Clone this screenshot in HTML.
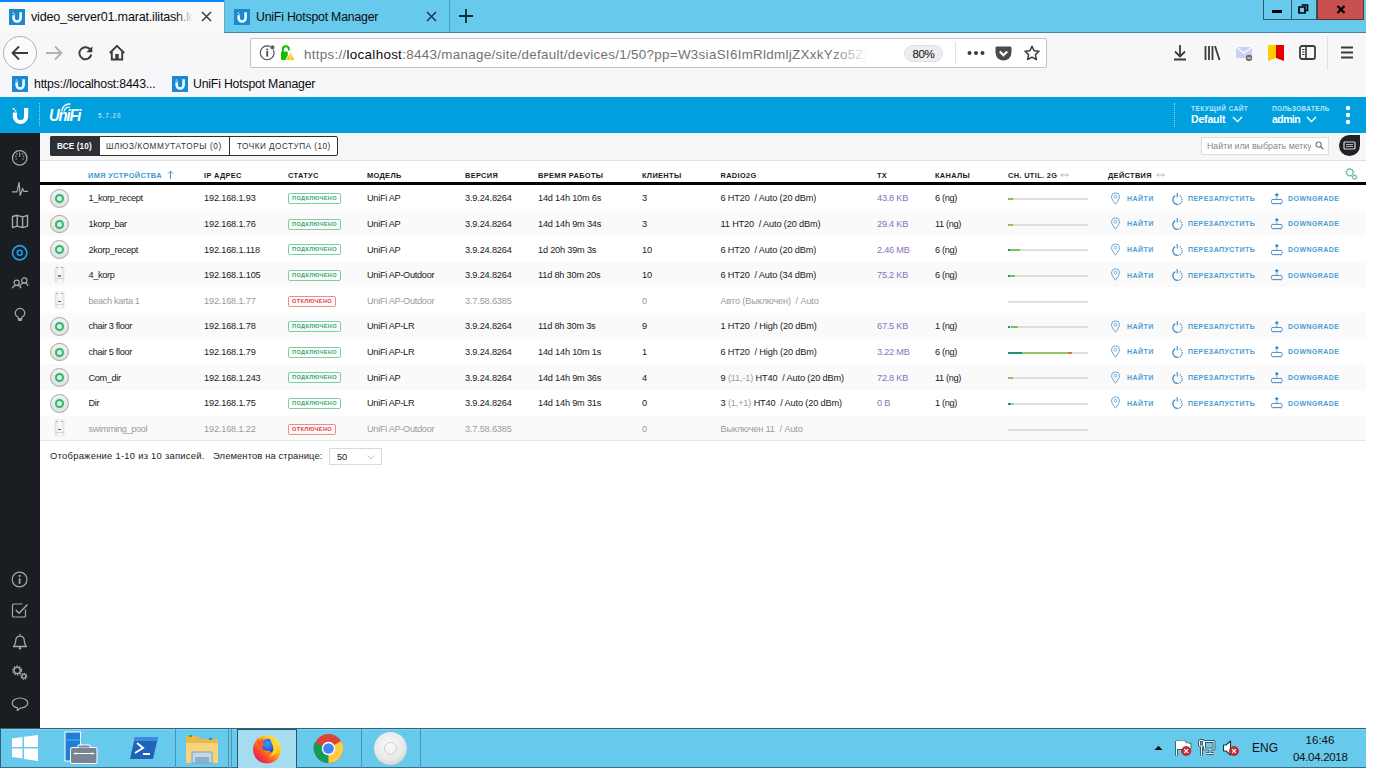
<!DOCTYPE html>
<html><head><meta charset="utf-8"><style>
*{box-sizing:border-box;margin:0;padding:0}
html,body{width:1397px;height:768px;overflow:hidden;background:#fff;font-family:"Liberation Sans",sans-serif;position:relative}
.a{position:absolute}
.fav{width:16px;height:16px}
.tabtxt{font-size:12.3px;letter-spacing:-0.2px;color:#0c0c0d;white-space:nowrap;line-height:16px}
.th{position:absolute;top:171px;font-size:7.4px;font-weight:bold;color:#1a1a1a;letter-spacing:0.35px;white-space:nowrap;line-height:9px}
.td{position:absolute;font-size:9.2px;color:#202020;white-space:nowrap;line-height:12px}
.c1{letter-spacing:-0.35px}.c2{letter-spacing:-0.17px}.c3{letter-spacing:-0.3px}.c4{letter-spacing:-0.17px}.c5{letter-spacing:-0.2px}.c6{letter-spacing:-0.17px}.c7{letter-spacing:-0.15px}.c8{letter-spacing:-0.22px}.c9{letter-spacing:-0.35px}
.off{color:#9a9a9a}
.tx{color:#8e6fc2}
.badge{position:absolute;width:53px;height:11px;border:1px solid #7ccfa4;border-radius:2px;font-size:5.6px;font-weight:bold;color:#35aa6c;text-align:center;line-height:9px;letter-spacing:0.36px}
.badge.r{width:48px;border-color:#ee8b8b;color:#e43b3b}
.act{position:absolute;font-size:7px;font-weight:bold;color:#4a9ed3;letter-spacing:0.45px;white-space:nowrap;line-height:9px}
.bar{position:absolute;left:1008px;width:80px;height:2px;background:#dedede}
.sico{position:absolute;left:10px;width:20px;height:20px}
</style></head><body>
<!-- TAB BAR -->
<div class="a" style="left:0;top:0;width:1366px;height:33px;background:#67c9eb;border-bottom:1px solid #4a8296"></div>
<div class="a" style="left:0;top:0;width:224px;height:34px;background:#f9f9fa;border-top:2px solid #0a84ff"></div>
<div class="a fav" style="left:9px;top:9px"><svg width="16" height="16" viewBox="0 0 16 16"><rect width="16" height="16" fill="#1a8ad0"/><path d="M3.3 6.2v2.8a4.8 4.8 0 0 0 9.6 0V3.2h-2.6V9a2.2 2.2 0 0 1-4.4 0V6.2z" fill="#f4fbff"/><rect x="3.6" y="3.4" width="1.4" height="1.4" fill="#cdeaf8"/><rect x="5.2" y="5" width="1" height="1" fill="#cdeaf8"/></svg></div>
<div class="a tabtxt" style="left:31px;top:9px;width:165px;overflow:hidden;font-size:12.6px">video_server01.marat.ilitash.loc</div>
<div class="a" style="left:176px;top:6px;width:20px;height:20px;background:linear-gradient(90deg,rgba(249,249,250,0),#f9f9fa 85%)"></div>
<svg class="a" style="left:201px;top:11px" width="11" height="11" viewBox="0 0 11 11"><path d="M1 1L10 10M10 1L1 10" stroke="#3b3b3d" stroke-width="1.5"/></svg>
<div class="a" style="left:224px;top:0;width:1px;height:32px;background:#5aaecb"></div>
<div class="a fav" style="left:234px;top:9px"><svg width="16" height="16" viewBox="0 0 16 16"><rect width="16" height="16" fill="#1a8ad0"/><path d="M3.3 6.2v2.8a4.8 4.8 0 0 0 9.6 0V3.2h-2.6V9a2.2 2.2 0 0 1-4.4 0V6.2z" fill="#f4fbff"/><rect x="3.6" y="3.4" width="1.4" height="1.4" fill="#cdeaf8"/><rect x="5.2" y="5" width="1" height="1" fill="#cdeaf8"/></svg></div>
<div class="a tabtxt" style="left:256px;top:9px">UniFi Hotspot Manager</div>
<svg class="a" style="left:426px;top:11px" width="11" height="11" viewBox="0 0 11 11"><path d="M1 1L10 10M10 1L1 10" stroke="#1d3b47" stroke-width="1.5"/></svg>
<div class="a" style="left:449px;top:0;width:1px;height:32px;background:#4d9fbd"></div>
<svg class="a" style="left:458px;top:8px" width="16" height="16" viewBox="0 0 16 16"><path d="M8 1V15M1 8H15" stroke="#0d2a35" stroke-width="1.8"/></svg>
<!-- window controls -->
<div class="a" style="left:1263px;top:0;width:29px;height:20px;background:#67c9eb;border:1px solid #2e5a6b;border-top:none"></div>
<div class="a" style="left:1272px;top:10px;width:10px;height:3px;background:#000"></div>
<div class="a" style="left:1291px;top:0;width:26px;height:20px;background:#67c9eb;border:1px solid #2e5a6b;border-top:none"></div>
<svg class="a" style="left:1298px;top:4px" width="11" height="10" viewBox="0 0 11 10"><path d="M3.5 1h6v5.5h-1.5M1 3h6v6H1z" fill="none" stroke="#000" stroke-width="1.7"/></svg>
<div class="a" style="left:1317px;top:0;width:47px;height:20px;background:#c75050;border:1px solid #5c3434;border-top:none"></div>
<svg class="a" style="left:1336px;top:5px" width="10" height="9" viewBox="0 0 10 9"><path d="M1.5 1L8.5 8M8.5 1L1.5 8" stroke="#000" stroke-width="2.2"/></svg>
<!-- NAV BAR -->
<div class="a" style="left:0;top:33px;width:1366px;height:64px;background:#f7f7f9"></div>
<div class="a" style="left:3px;top:36px;width:34px;height:34px;border-radius:50%;border:1px solid #b1b1b3;background:#fbfbfb"></div>
<svg class="a" style="left:11px;top:45px" width="18" height="16" viewBox="0 0 18 16"><path d="M17 8H2M8 1.5L1.5 8L8 14.5" fill="none" stroke="#3b3b3d" stroke-width="1.8"/></svg>
<svg class="a" style="left:45px;top:45px" width="18" height="16" viewBox="0 0 18 16"><path d="M1 8H16M10 1.5L16.5 8L10 14.5" fill="none" stroke="#b1b1b3" stroke-width="1.8"/></svg>
<svg class="a" style="left:77px;top:45px" width="17" height="16" viewBox="0 0 17 16"><path d="M13.6 5.2A6 6 0 1 0 14.3 9.5" fill="none" stroke="#3b3b3d" stroke-width="1.9"/><path d="M15.3 1.3V7.2H9.4z" fill="#3b3b3d"/></svg>
<svg class="a" style="left:108px;top:44px" width="18" height="18" viewBox="0 0 18 18"><path d="M1.8 9L9 1.8L16.2 9" fill="none" stroke="#3b3b3d" stroke-width="1.9" stroke-linejoin="round"/><path d="M3.8 7.5V15.5H14.2V7.5" fill="none" stroke="#3b3b3d" stroke-width="1.9"/><rect x="7.3" y="10" width="3.4" height="5.5" fill="#3b3b3d"/></svg>
<!-- URL BAR -->
<div class="a" style="left:250px;top:38px;width:797px;height:30px;background:#fff;border:1px solid #c2c2c4;border-radius:2px"></div>
<svg class="a" style="left:258px;top:44px" width="18" height="18" viewBox="0 0 18 18"><circle cx="9.2" cy="8.8" r="6.9" fill="none" stroke="#4a4a4f" stroke-width="1.1"/><rect x="8.3" y="7" width="1.8" height="5.6" fill="#4a4a4f"/><rect x="8.3" y="4.6" width="1.8" height="1.6" fill="#4a4a4f"/><circle cx="14.4" cy="3.4" r="2.4" fill="#5a5a5f" stroke="#fff" stroke-width="0.7"/></svg>
<svg class="a" style="left:280px;top:45px" width="16" height="16" viewBox="0 0 16 16"><rect x="1" y="6.5" width="6.8" height="8.5" rx="1.3" fill="#12bc00"/><path d="M2.8 7V4.2a3 3 0 0 1 6 0V5.4" fill="none" stroke="#12bc00" stroke-width="1.9"/><path d="M10.3 6.8L15.2 15.6H5.4z" fill="#ffc20e" stroke="#fff" stroke-width="0.9" stroke-linejoin="round"/><rect x="9.8" y="9.4" width="1" height="3.4" fill="#fff"/><rect x="9.8" y="13.5" width="1" height="1" fill="#fff"/></svg>
<div class="a" style="left:304px;top:45.5px;font-size:13.4px;letter-spacing:0.3px;color:#737373;white-space:nowrap;width:580px;overflow:hidden;line-height:17px">https://<span style="color:#0c0c0d">localhost</span>:8443/manage/site/default/devices/1/50?pp=W3siaSI6ImRldmljZXxkYzo5ZjpkYjpm</div>
<div class="a" style="left:832px;top:40px;width:60px;height:26px;background:linear-gradient(90deg,rgba(255,255,255,0),#fff 60%)"></div>
<div class="a" style="left:904px;top:45px;width:39px;height:17px;border-radius:9px;background:#ededf0;border:1px solid #e0e0e2;font-size:11.5px;letter-spacing:-0.4px;color:#0c0c0d;text-align:center;line-height:16px">80%</div>
<div class="a" style="left:955px;top:42px;width:1px;height:22px;background:#e1e1e2"></div>
<svg class="a" style="left:967px;top:50px" width="18" height="6" viewBox="0 0 18 6"><circle cx="2.5" cy="3" r="2" fill="#3b3b3d"/><circle cx="9" cy="3" r="2" fill="#3b3b3d"/><circle cx="15.5" cy="3" r="2" fill="#3b3b3d"/></svg>
<svg class="a" style="left:995px;top:46px" width="17" height="15" viewBox="0 0 17 15"><path d="M.5 2C.5 1 1.2.5 2 .5h13c.8 0 1.5.5 1.5 1.5V6.5a8 8 0 0 1-16 0z" fill="#4a4a4f"/><path d="M4.8 5.5L8.5 9.2l3.7-3.7" fill="none" stroke="#fff" stroke-width="2.2"/></svg>
<svg class="a" style="left:1024px;top:45px" width="16" height="16" viewBox="0 0 16 16"><path d="M8 1.2l2.1 4.5 4.9.6-3.6 3.3 1 4.9L8 12.1l-4.4 2.4 1-4.9L1 6.3l4.9-.6z" fill="none" stroke="#3b3b3d" stroke-width="1.5" stroke-linejoin="round"/></svg>
<!-- right toolbar icons -->
<svg class="a" style="left:1172px;top:44px" width="16" height="17" viewBox="0 0 16 17"><path d="M8 1v11M3 7.5L8 12.5L13 7.5M2 15.5H14" fill="none" stroke="#3b3b3d" stroke-width="1.8"/></svg>
<svg class="a" style="left:1204px;top:45px" width="17" height="15" viewBox="0 0 17 15"><path d="M1.5 1v14M5 1v14M8.5 1v14M11 1l4.5 14" fill="none" stroke="#3b3b3d" stroke-width="1.8"/></svg>
<svg class="a" style="left:1236px;top:46px" width="17" height="15" viewBox="0 0 17 15"><path d="M0 1h16v11H0z" fill="#c8d3ef"/><path d="M0 1L8 7L16 1" fill="none" stroke="#fff" stroke-width="1.2"/><circle cx="13" cy="12" r="3.2" fill="#6d6d6d"/><path d="M11.3 12h3.5" stroke="#fff" stroke-width="1"/></svg>
<svg class="a" style="left:1268px;top:45px" width="16" height="16" viewBox="0 0 16 16"><path d="M0 0h8v13L0 16z" fill="#ffcc00"/><path d="M8 0h8v16L8 13z" fill="#e60000"/></svg>
<svg class="a" style="left:1299px;top:45px" width="17" height="15" viewBox="0 0 17 15"><rect x="1" y="1" width="15" height="13" rx="2" fill="none" stroke="#3b3b3d" stroke-width="1.8"/><path d="M7 1v13" stroke="#3b3b3d" stroke-width="1.6"/><path d="M3 4.5h2.5M3 7h2.5M3 9.5h2.5" stroke="#3b3b3d" stroke-width="1"/></svg>
<div class="a" style="left:1327px;top:36px;width:1px;height:34px;background:#e1e1e2"></div>
<svg class="a" style="left:1340px;top:46px" width="14" height="13" viewBox="0 0 14 13"><path d="M1 1.5h12M1 6.5h12M1 11.5h12" stroke="#3b3b3d" stroke-width="1.8"/></svg>
<!-- BOOKMARKS -->
<div class="a fav" style="left:12px;top:76px"><svg width="16" height="16" viewBox="0 0 16 16"><rect width="16" height="16" fill="#1a8ad0"/><path d="M3.3 6.2v2.8a4.8 4.8 0 0 0 9.6 0V3.2h-2.6V9a2.2 2.2 0 0 1-4.4 0V6.2z" fill="#f4fbff"/><rect x="3.6" y="3.4" width="1.4" height="1.4" fill="#cdeaf8"/><rect x="5.2" y="5" width="1" height="1" fill="#cdeaf8"/></svg></div>
<div class="a tabtxt" style="left:34px;top:76px">https://localhost:8443...</div>
<div class="a fav" style="left:172px;top:76px"><svg width="16" height="16" viewBox="0 0 16 16"><rect width="16" height="16" fill="#1a8ad0"/><path d="M3.3 6.2v2.8a4.8 4.8 0 0 0 9.6 0V3.2h-2.6V9a2.2 2.2 0 0 1-4.4 0V6.2z" fill="#f4fbff"/><rect x="3.6" y="3.4" width="1.4" height="1.4" fill="#cdeaf8"/><rect x="5.2" y="5" width="1" height="1" fill="#cdeaf8"/></svg></div>
<div class="a tabtxt" style="left:193px;top:76px">UniFi Hotspot Manager</div>


<!-- UNIFI HEADER -->
<div class="a" style="left:0;top:97px;width:1366px;height:36px;background:#00a0df"></div>
<svg class="a" style="left:12px;top:106.5px" width="17" height="17" viewBox="0 0 17 17"><path d="M0.8 5.5v4a7.7 7.5 0 0 0 15.4 0V1h-4.2v8.5a3.5 3.5 0 0 1-7 0V5.5z" fill="#fff"/><rect x="0.8" y="1" width="1.8" height="1.8" fill="#fff"/><rect x="2.8" y="3" width="1.5" height="1.5" fill="#fff"/></svg>
<div class="a" style="left:39px;top:103px;width:1px;height:23px;border-left:1px dotted rgba(255,255,255,0.55)"></div>
<div class="a" style="left:49px;top:105.5px;font-size:16.5px;font-weight:bold;font-style:italic;color:#fff;letter-spacing:-1.3px;line-height:19px;transform:scaleX(0.9);transform-origin:0 0">UniFi</div>
<svg class="a" style="left:61px;top:102.5px" width="10" height="9" viewBox="0 0 10 9"><path d="M1 8.5A7 7 0 0 1 9.5 1.2M3.2 8.5A4.5 4.5 0 0 1 8.8 4.3" fill="none" stroke="#fff" stroke-width="1.3"/></svg>
<div class="a" style="left:98px;top:112px;font-size:6.3px;font-weight:bold;color:#9fdcf5;letter-spacing:1.0px;line-height:8px">5.7.20</div>
<div class="a" style="left:1174px;top:103px;width:1px;height:24px;border-left:1px dotted rgba(255,255,255,0.6)"></div>
<div class="a" style="left:1191px;top:105px;font-size:6.4px;font-weight:bold;color:#b9e6f8;letter-spacing:0.5px;line-height:8px">ТЕКУЩИЙ САЙТ</div>
<div class="a" style="left:1191px;top:113px;font-size:10.6px;font-weight:bold;color:#fff;line-height:12px;letter-spacing:-0.22px">Default</div>
<svg class="a" style="left:1232px;top:116px" width="11" height="7" viewBox="0 0 11 7"><path d="M1 1l4.5 4.5L10 1" fill="none" stroke="#fff" stroke-width="1.4"/></svg>
<div class="a" style="left:1272px;top:105px;font-size:6.4px;font-weight:bold;color:#b9e6f8;letter-spacing:0.4px;line-height:8px">ПОЛЬЗОВАТЕЛЬ</div>
<div class="a" style="left:1272px;top:113.7px;font-size:10.4px;font-weight:bold;color:#fff;line-height:12px;letter-spacing:-0.5px">admin</div>
<svg class="a" style="left:1306px;top:116px" width="11" height="7" viewBox="0 0 11 7"><path d="M1 1l4.5 4.5L10 1" fill="none" stroke="#fff" stroke-width="1.4"/></svg>
<svg class="a" style="left:1345px;top:105px" width="6" height="20" viewBox="0 0 6 20"><circle cx="3" cy="3" r="2.2" fill="#fff"/><circle cx="3" cy="10" r="2.2" fill="#fff"/><circle cx="3" cy="17" r="2.2" fill="#fff"/></svg>
<!-- SIDEBAR -->
<div class="a" style="left:0;top:133px;width:40px;height:595px;background:#1a1d22"></div>
<svg class="a" style="left:10px;top:148px" width="20" height="20" viewBox="0 0 20 20"><circle cx="9.7" cy="9.9" r="7.2" fill="none" stroke="#a8aaad" stroke-width="1.3"/><path d="M9.7 4.5v4.2M5 8.2h1.8M12.6 8.2h1.8M6.3 5.3l1.1 1M13.1 5.3l-1.1 1M5.6 11h1.5M12.3 11h1.5" stroke="#a8aaad" stroke-width="1.1"/></svg>
<svg class="a" style="left:10px;top:180px" width="20" height="20" viewBox="0 0 20 20"><path d="M2 11.9H7L9.1 2.5L10.2 15.4L12.6 8.4L13.8 11.3H18" fill="none" stroke="#a8aaad" stroke-width="1.2" stroke-linejoin="round"/></svg>
<svg class="a" style="left:10px;top:211px" width="20" height="20" viewBox="0 0 20 20"><path d="M2.5 5.5L7.2 4.3L12.6 5.8L17.5 4.3V15.2L12.6 16.6L7.2 15.1L2.5 16.6z M7.2 4.3V15.1 M12.6 5.8V16.6" fill="none" stroke="#a8aaad" stroke-width="1.4" stroke-linejoin="round"/></svg>
<svg class="a" style="left:10px;top:242.5px" width="20" height="20" viewBox="0 0 20 20"><circle cx="9.7" cy="9.8" r="7.1" fill="none" stroke="#1e9fe3" stroke-width="1.7"/><circle cx="9.7" cy="9.8" r="2.5" fill="none" stroke="#1e9fe3" stroke-width="1.6"/></svg>
<svg class="a" style="left:10px;top:274px" width="20" height="20" viewBox="0 0 20 20"><circle cx="6.7" cy="8.8" r="2.6" fill="none" stroke="#a8aaad" stroke-width="1.2"/><circle cx="14.3" cy="6.4" r="2.6" fill="none" stroke="#a8aaad" stroke-width="1.2"/><path d="M2.3 14.2C3 12.3 4.5 11.4 6.7 11.4S10.4 12.3 11.1 14.2M10.2 11.6C10.8 9.9 12.3 9 14.3 9S17.6 9.9 18 11.8" fill="none" stroke="#a8aaad" stroke-width="1.2"/></svg>
<svg class="a" style="left:10px;top:305px" width="20" height="20" viewBox="0 0 20 20"><path d="M8.2 13.8V12.2C6.3 11.2 5.2 9.8 5.2 8.2a4.8 4.8 0 0 1 9.6 0c0 1.6-1.1 3-3 4v1.6z" fill="none" stroke="#a8aaad" stroke-width="1.2"/><rect x="8.3" y="13.6" width="3.4" height="2.4" fill="#a8aaad"/></svg>
<svg class="a" style="left:10px;top:569.5px" width="20" height="20" viewBox="0 0 20 20"><circle cx="9.6" cy="9.5" r="7.4" fill="none" stroke="#a8aaad" stroke-width="1.2"/><path d="M9.6 8.3v5.5" stroke="#a8aaad" stroke-width="1.7"/><circle cx="9.6" cy="5.9" r="1.05" fill="#a8aaad"/></svg>
<svg class="a" style="left:10px;top:600px" width="20" height="20" viewBox="0 0 20 20"><path d="M15.5 9.5V16a1 1 0 0 1-1 1H3.5a1 1 0 0 1-1-1V5a1 1 0 0 1 1-1h9" fill="none" stroke="#a8aaad" stroke-width="1.2"/><path d="M5.8 10l3.2 3.2L17.5 4.5" fill="none" stroke="#a8aaad" stroke-width="1.4"/></svg>
<svg class="a" style="left:10px;top:631px" width="20" height="20" viewBox="0 0 20 20"><path d="M3.5 15.5h13c-1.6-1.6-2.3-3-2.3-6.2a4.2 4.2 0 0 0-8.4 0c0 3.2-.7 4.6-2.3 6.2z" fill="none" stroke="#a8aaad" stroke-width="1.3" stroke-linejoin="round"/><path d="M10 3v1.2" stroke="#a8aaad" stroke-width="1.3"/><circle cx="10" cy="17.3" r="1.2" fill="#a8aaad"/></svg>
<svg class="a" style="left:10px;top:662px" width="20" height="20" viewBox="0 0 20 20"><circle cx="7.2" cy="8.5" r="3.1" fill="none" stroke="#a8aaad" stroke-width="1.3"/><circle cx="7.2" cy="8.5" r="4.3" fill="none" stroke="#a8aaad" stroke-width="1.5" stroke-dasharray="1.5 1.2"/><circle cx="13.9" cy="14.3" r="1.9" fill="none" stroke="#a8aaad" stroke-width="1.2"/><circle cx="13.9" cy="14.3" r="2.9" fill="none" stroke="#a8aaad" stroke-width="1.3" stroke-dasharray="1.2 1"/></svg>
<svg class="a" style="left:10px;top:694px" width="20" height="20" viewBox="0 0 20 20"><path d="M10 4C5.6 4 2.2 6.1 2.2 9c0 2.3 2.2 4.2 5.3 4.8L7.3 16.5L10.6 14c4-.2 7.2-2.3 7.2-5C17.8 6.1 14.4 4 10 4z" fill="none" stroke="#a8aaad" stroke-width="1.2" stroke-linejoin="round"/></svg>
<!-- TOOLBAR -->
<div class="a" style="left:40px;top:133px;width:1326px;height:28px;background:#f6f6f6;border-bottom:1px solid #e2e2e2"></div>
<div class="a" style="left:50px;top:136px;width:288px;height:20px;border:1px solid #2c2f33;border-radius:2px;background:#fff"></div>
<div class="a" style="left:50px;top:136px;width:50px;height:20px;background:#2c2f33;border-radius:2px 0 0 2px"></div>
<div class="a" style="left:229px;top:136px;width:1px;height:20px;background:#2c2f33"></div>
<div class="a" style="left:57px;top:141.7px;font-size:8.2px;font-weight:bold;color:#fff;line-height:10px;letter-spacing:0.12px">ВСЕ (10)</div>
<div class="a" style="left:106px;top:141.7px;font-size:8.2px;color:#333;line-height:10px;letter-spacing:0.6px">ШЛЮЗ/КОММУТАТОРЫ (0)</div>
<div class="a" style="left:237px;top:141.7px;font-size:8.2px;color:#333;line-height:10px;letter-spacing:0.48px">ТОЧКИ ДОСТУПА (10)</div>
<div class="a" style="left:1201px;top:137px;width:128px;height:18px;background:#fff;border:1px solid #dcdcdc"></div>
<div class="a" style="left:1207px;top:141px;width:104px;overflow:hidden;font-size:8.8px;color:#888;line-height:10px;white-space:nowrap">Найти или выбрать метку</div>
<svg class="a" style="left:1315px;top:141px" width="9" height="9" viewBox="0 0 9 9"><circle cx="3.6" cy="3.6" r="2.6" fill="none" stroke="#777" stroke-width="1.1"/><path d="M5.5 5.5L8.3 8.3" stroke="#777" stroke-width="1.3"/></svg>
<div class="a" style="left:1339px;top:135px;width:21px;height:21px;background:#1f2226;border-radius:50% 0 50% 50%"></div>
<svg class="a" style="left:1343px;top:140px" width="13" height="11" viewBox="0 0 13 11"><rect x="1" y="2" width="11" height="7" rx="1" fill="none" stroke="#d8d8d8" stroke-width="1.2"/><path d="M3 4.5h7M3 6.5h7" stroke="#d8d8d8" stroke-width="0.8"/></svg>
<!-- TABLE HEADER -->
<div class="th" style="left:88px;color:#3a9ad6">ИМЯ УСТРОЙСТВА</div>
<svg class="a" style="left:167px;top:170px" width="7" height="10" viewBox="0 0 7 10"><path d="M3.5 1.2V8.8M1 3.7L3.5 1.2L6 3.7" fill="none" stroke="#4a8fc2" stroke-width="1"/></svg>
<div class="th" style="left:204px">IP АДРЕС</div>
<div class="th" style="left:288px">СТАТУС</div>
<div class="th" style="left:367px">МОДЕЛЬ</div>
<div class="th" style="left:465px">ВЕРСИЯ</div>
<div class="th" style="left:538px">ВРЕМЯ РАБОТЫ</div>
<div class="th" style="left:642px">КЛИЕНТЫ</div>
<div class="th" style="left:720.5px">RADIO2G</div>
<div class="th" style="left:877px">TX</div>
<div class="th" style="left:935px">КАНАЛЫ</div>
<div class="th" style="left:1008px">CH. UTIL. 2G</div>
<svg class="a" style="left:1060px;top:172px" width="9" height="6" viewBox="0 0 9 6"><path d="M0.8 3H8.2M2.5 1.2L0.8 3L2.5 4.8M6.5 1.2L8.2 3L6.5 4.8" fill="none" stroke="#aaa" stroke-width="0.8"/></svg>
<div class="th" style="left:1108px">ДЕЙСТВИЯ</div>
<svg class="a" style="left:1156px;top:172px" width="9" height="6" viewBox="0 0 9 6"><path d="M0.8 3H8.2M2.5 1.2L0.8 3L2.5 4.8M6.5 1.2L8.2 3L6.5 4.8" fill="none" stroke="#aaa" stroke-width="0.8"/></svg>
<svg class="a" style="left:1344px;top:167px" width="14" height="14" viewBox="0 0 14 14"><circle cx="5.8" cy="5.4" r="3.3" fill="none" stroke="#3aa775" stroke-width="0.8"/><circle cx="5.8" cy="5.4" r="4" fill="none" stroke="#3aa775" stroke-width="0.9" stroke-dasharray="0.9 1.2"/><circle cx="10.6" cy="10.2" r="1.8" fill="none" stroke="#3aa775" stroke-width="0.8"/><circle cx="10.6" cy="10.2" r="2.4" fill="none" stroke="#3aa775" stroke-width="0.8" stroke-dasharray="0.8 0.9"/></svg>
<div class="a" style="left:40px;top:182px;width:1326px;height:3px;background:#000"></div>
<div class="a" style="left:50px;top:189.1px;width:18.8px;height:18.8px;border-radius:50%;background:radial-gradient(circle at 50% 35%,#fbfbfb 0,#ececec 50%,#d2d2d2 100%);border:1.3px solid #a9a9a9"></div>
<div class="a" style="left:54.9px;top:194.0px;width:9px;height:9px;border-radius:50%;border:2px solid #3ab476;background:#d6f6e0;box-shadow:0 0 1px 0.5px rgba(120,230,160,0.5)"></div>
<div class="td c1" style="left:88.5px;top:192.3px">1_korp_recept</div>
<div class="td c2" style="left:204px;top:192.3px">192.168.1.93</div>
<div class="badge" style="left:288px;top:193.2px">ПОДКЛЮЧЕНО</div>
<div class="td c3" style="left:367px;top:192.3px">UniFi AP</div>
<div class="td c4" style="left:465px;top:192.3px">3.9.24.8264</div>
<div class="td c5" style="left:538px;top:192.3px">14d 14h 10m 6s</div>
<div class="td c6" style="left:642px;top:192.3px">3</div>
<div class="td c7" style="left:720.5px;top:192.3px">6 HT20&nbsp; / Auto (20 dBm)</div>
<div class="td tx c8" style="left:877px;top:192.3px">43.8 KB</div>
<div class="td c9" style="left:935px;top:192.3px">6 (ng)</div>
<div class="bar" style="top:198.1px"></div>
<div class="a" style="left:1008px;top:198.1px;width:5px;height:2px;background:#7cc35b"></div>
<svg class="a" style="left:1110px;top:191.5px" width="11" height="13" viewBox="0 0 11 13"><path d="M5.5 12.2C3.2 9 1.5 6.8 1.5 4.8a4 4 0 0 1 8 0c0 2-1.7 4.2-4 7.4z" fill="none" stroke="#6aa8d6" stroke-width="1"/><circle cx="5.5" cy="4.7" r="1.4" fill="none" stroke="#6aa8d6" stroke-width="0.9"/></svg>
<div class="act" style="left:1127px;top:193.7px">НАЙТИ</div>
<svg class="a" style="left:1171px;top:191.5px" width="13" height="13" viewBox="0 0 13 13"><path d="M4.2 3.6A4.8 4.8 0 0 0 6.5 12.5" fill="none" stroke="#3d8fc6" stroke-width="1.3"/><path d="M6.5 12.5A4.8 4.8 0 0 0 8.8 3.6" fill="none" stroke="#3d8fc6" stroke-width="1.3" stroke-dasharray="1.2 1"/><path d="M6.3 1V5.5" stroke="#4a9ed3" stroke-width="1.3"/></svg>
<div class="act" style="left:1188px;top:193.7px">ПЕРЕЗАПУСТИТЬ</div>
<svg class="a" style="left:1270px;top:191.5px" width="14" height="13" viewBox="0 0 14 13"><path d="M6.8 0.6L7.5 2L9 2.1L7.9 3.1L8.2 4.5L6.8 3.8L5.4 4.5L5.7 3.1L4.6 2.1L6.1 2z" fill="#2f86c0"/><path d="M6.8 4.2v3.3" fill="none" stroke="#8fbde0" stroke-width="1.2"/><rect x="1.6" y="7.5" width="10.5" height="4" rx="0.8" fill="none" stroke="#5a93c6" stroke-width="1"/><path d="M3 6.8v0.8M5.3 6.8v0.8M8.3 6.8v0.8M10.7 6.8v0.8M3 11.5v1M5.3 11.5v1M8.3 11.5v1M10.7 11.5v1" stroke="#5a93c6" stroke-width="0.9"/></svg>
<div class="act" style="left:1288px;top:193.7px">DOWNGRADE</div>
<div class="a" style="left:40px;top:210.7px;width:1326px;height:25.6px;background:#fafafa"></div>
<div class="a" style="left:50px;top:214.7px;width:18.8px;height:18.8px;border-radius:50%;background:radial-gradient(circle at 50% 35%,#fbfbfb 0,#ececec 50%,#d2d2d2 100%);border:1.3px solid #a9a9a9"></div>
<div class="a" style="left:54.9px;top:219.6px;width:9px;height:9px;border-radius:50%;border:2px solid #3ab476;background:#d6f6e0;box-shadow:0 0 1px 0.5px rgba(120,230,160,0.5)"></div>
<div class="td c1" style="left:88.5px;top:217.9px">1korp_bar</div>
<div class="td c2" style="left:204px;top:217.9px">192.168.1.76</div>
<div class="badge" style="left:288px;top:218.8px">ПОДКЛЮЧЕНО</div>
<div class="td c3" style="left:367px;top:217.9px">UniFi AP</div>
<div class="td c4" style="left:465px;top:217.9px">3.9.24.8264</div>
<div class="td c5" style="left:538px;top:217.9px">14d 14h 9m 34s</div>
<div class="td c6" style="left:642px;top:217.9px">3</div>
<div class="td c7" style="left:720.5px;top:217.9px">11 HT20&nbsp; / Auto (20 dBm)</div>
<div class="td tx c8" style="left:877px;top:217.9px">29.4 KB</div>
<div class="td c9" style="left:935px;top:217.9px">11 (ng)</div>
<div class="bar" style="top:223.7px"></div>
<div class="a" style="left:1008px;top:223.7px;width:5px;height:2px;background:#8cc36b"></div>
<svg class="a" style="left:1110px;top:217.1px" width="11" height="13" viewBox="0 0 11 13"><path d="M5.5 12.2C3.2 9 1.5 6.8 1.5 4.8a4 4 0 0 1 8 0c0 2-1.7 4.2-4 7.4z" fill="none" stroke="#6aa8d6" stroke-width="1"/><circle cx="5.5" cy="4.7" r="1.4" fill="none" stroke="#6aa8d6" stroke-width="0.9"/></svg>
<div class="act" style="left:1127px;top:219.3px">НАЙТИ</div>
<svg class="a" style="left:1171px;top:217.1px" width="13" height="13" viewBox="0 0 13 13"><path d="M4.2 3.6A4.8 4.8 0 0 0 6.5 12.5" fill="none" stroke="#3d8fc6" stroke-width="1.3"/><path d="M6.5 12.5A4.8 4.8 0 0 0 8.8 3.6" fill="none" stroke="#3d8fc6" stroke-width="1.3" stroke-dasharray="1.2 1"/><path d="M6.3 1V5.5" stroke="#4a9ed3" stroke-width="1.3"/></svg>
<div class="act" style="left:1188px;top:219.3px">ПЕРЕЗАПУСТИТЬ</div>
<svg class="a" style="left:1270px;top:217.1px" width="14" height="13" viewBox="0 0 14 13"><path d="M6.8 0.6L7.5 2L9 2.1L7.9 3.1L8.2 4.5L6.8 3.8L5.4 4.5L5.7 3.1L4.6 2.1L6.1 2z" fill="#2f86c0"/><path d="M6.8 4.2v3.3" fill="none" stroke="#8fbde0" stroke-width="1.2"/><rect x="1.6" y="7.5" width="10.5" height="4" rx="0.8" fill="none" stroke="#5a93c6" stroke-width="1"/><path d="M3 6.8v0.8M5.3 6.8v0.8M8.3 6.8v0.8M10.7 6.8v0.8M3 11.5v1M5.3 11.5v1M8.3 11.5v1M10.7 11.5v1" stroke="#5a93c6" stroke-width="0.9"/></svg>
<div class="act" style="left:1288px;top:219.3px">DOWNGRADE</div>
<div class="a" style="left:50px;top:240.3px;width:18.8px;height:18.8px;border-radius:50%;background:radial-gradient(circle at 50% 35%,#fbfbfb 0,#ececec 50%,#d2d2d2 100%);border:1.3px solid #a9a9a9"></div>
<div class="a" style="left:54.9px;top:245.2px;width:9px;height:9px;border-radius:50%;border:2px solid #3ab476;background:#d6f6e0;box-shadow:0 0 1px 0.5px rgba(120,230,160,0.5)"></div>
<div class="td c1" style="left:88.5px;top:243.5px">2korp_recept</div>
<div class="td c2" style="left:204px;top:243.5px">192.168.1.118</div>
<div class="badge" style="left:288px;top:244.4px">ПОДКЛЮЧЕНО</div>
<div class="td c3" style="left:367px;top:243.5px">UniFi AP</div>
<div class="td c4" style="left:465px;top:243.5px">3.9.24.8264</div>
<div class="td c5" style="left:538px;top:243.5px">1d 20h 39m 3s</div>
<div class="td c6" style="left:642px;top:243.5px">10</div>
<div class="td c7" style="left:720.5px;top:243.5px">6 HT20&nbsp; / Auto (20 dBm)</div>
<div class="td tx c8" style="left:877px;top:243.5px">2.46 MB</div>
<div class="td c9" style="left:935px;top:243.5px">6 (ng)</div>
<div class="bar" style="top:249.3px"></div>
<div class="a" style="left:1008px;top:249.3px;width:2px;height:2px;background:#21907e"></div>
<div class="a" style="left:1010px;top:249.3px;width:10px;height:2px;background:#7cc35b"></div>
<svg class="a" style="left:1110px;top:242.7px" width="11" height="13" viewBox="0 0 11 13"><path d="M5.5 12.2C3.2 9 1.5 6.8 1.5 4.8a4 4 0 0 1 8 0c0 2-1.7 4.2-4 7.4z" fill="none" stroke="#6aa8d6" stroke-width="1"/><circle cx="5.5" cy="4.7" r="1.4" fill="none" stroke="#6aa8d6" stroke-width="0.9"/></svg>
<div class="act" style="left:1127px;top:244.9px">НАЙТИ</div>
<svg class="a" style="left:1171px;top:242.7px" width="13" height="13" viewBox="0 0 13 13"><path d="M4.2 3.6A4.8 4.8 0 0 0 6.5 12.5" fill="none" stroke="#3d8fc6" stroke-width="1.3"/><path d="M6.5 12.5A4.8 4.8 0 0 0 8.8 3.6" fill="none" stroke="#3d8fc6" stroke-width="1.3" stroke-dasharray="1.2 1"/><path d="M6.3 1V5.5" stroke="#4a9ed3" stroke-width="1.3"/></svg>
<div class="act" style="left:1188px;top:244.9px">ПЕРЕЗАПУСТИТЬ</div>
<svg class="a" style="left:1270px;top:242.7px" width="14" height="13" viewBox="0 0 14 13"><path d="M6.8 0.6L7.5 2L9 2.1L7.9 3.1L8.2 4.5L6.8 3.8L5.4 4.5L5.7 3.1L4.6 2.1L6.1 2z" fill="#2f86c0"/><path d="M6.8 4.2v3.3" fill="none" stroke="#8fbde0" stroke-width="1.2"/><rect x="1.6" y="7.5" width="10.5" height="4" rx="0.8" fill="none" stroke="#5a93c6" stroke-width="1"/><path d="M3 6.8v0.8M5.3 6.8v0.8M8.3 6.8v0.8M10.7 6.8v0.8M3 11.5v1M5.3 11.5v1M8.3 11.5v1M10.7 11.5v1" stroke="#5a93c6" stroke-width="0.9"/></svg>
<div class="act" style="left:1288px;top:244.9px">DOWNGRADE</div>
<div class="a" style="left:40px;top:261.9px;width:1326px;height:25.6px;background:#fafafa"></div>
<div class="a" style="left:55px;top:266.7px;width:9px;height:16px;border-radius:1.5px;background:linear-gradient(90deg,#e0e0e0,#f8f8f8 45%,#fafafa 60%,#e2e2e2);box-shadow:0 0 0 0.5px #e6e6e6"></div>
<div class="a" style="left:56px;top:266.9px;width:2px;height:1px;background:#b9aaa0"></div>
<div class="a" style="left:61px;top:266.9px;width:2px;height:1px;background:#b9aaa0"></div>
<div class="a" style="left:55.5px;top:278.1px;width:8px;height:0.8px;background:#d5d5d5"></div>
<div class="a" style="left:58.2px;top:275.1px;width:2.6px;height:1.8px;border-radius:0.8px;background:#5f7d6c"></div>
<div class="td c1" style="left:88.5px;top:269.1px">4_korp</div>
<div class="td c2" style="left:204px;top:269.1px">192.168.1.105</div>
<div class="badge" style="left:288px;top:270.0px">ПОДКЛЮЧЕНО</div>
<div class="td c3" style="left:367px;top:269.1px">UniFi AP-Outdoor</div>
<div class="td c4" style="left:465px;top:269.1px">3.9.24.8264</div>
<div class="td c5" style="left:538px;top:269.1px">11d 8h 30m 20s</div>
<div class="td c6" style="left:642px;top:269.1px">10</div>
<div class="td c7" style="left:720.5px;top:269.1px">6 HT20&nbsp; / Auto (34 dBm)</div>
<div class="td tx c8" style="left:877px;top:269.1px">75.2 KB</div>
<div class="td c9" style="left:935px;top:269.1px">6 (ng)</div>
<div class="bar" style="top:274.9px"></div>
<div class="a" style="left:1008px;top:274.9px;width:2px;height:2px;background:#21907e"></div>
<div class="a" style="left:1010px;top:274.9px;width:5px;height:2px;background:#7cc35b"></div>
<svg class="a" style="left:1110px;top:268.3px" width="11" height="13" viewBox="0 0 11 13"><path d="M5.5 12.2C3.2 9 1.5 6.8 1.5 4.8a4 4 0 0 1 8 0c0 2-1.7 4.2-4 7.4z" fill="none" stroke="#6aa8d6" stroke-width="1"/><circle cx="5.5" cy="4.7" r="1.4" fill="none" stroke="#6aa8d6" stroke-width="0.9"/></svg>
<div class="act" style="left:1127px;top:270.5px">НАЙТИ</div>
<svg class="a" style="left:1171px;top:268.3px" width="13" height="13" viewBox="0 0 13 13"><path d="M4.2 3.6A4.8 4.8 0 0 0 6.5 12.5" fill="none" stroke="#3d8fc6" stroke-width="1.3"/><path d="M6.5 12.5A4.8 4.8 0 0 0 8.8 3.6" fill="none" stroke="#3d8fc6" stroke-width="1.3" stroke-dasharray="1.2 1"/><path d="M6.3 1V5.5" stroke="#4a9ed3" stroke-width="1.3"/></svg>
<div class="act" style="left:1188px;top:270.5px">ПЕРЕЗАПУСТИТЬ</div>
<svg class="a" style="left:1270px;top:268.3px" width="14" height="13" viewBox="0 0 14 13"><path d="M6.8 0.6L7.5 2L9 2.1L7.9 3.1L8.2 4.5L6.8 3.8L5.4 4.5L5.7 3.1L4.6 2.1L6.1 2z" fill="#2f86c0"/><path d="M6.8 4.2v3.3" fill="none" stroke="#8fbde0" stroke-width="1.2"/><rect x="1.6" y="7.5" width="10.5" height="4" rx="0.8" fill="none" stroke="#5a93c6" stroke-width="1"/><path d="M3 6.8v0.8M5.3 6.8v0.8M8.3 6.8v0.8M10.7 6.8v0.8M3 11.5v1M5.3 11.5v1M8.3 11.5v1M10.7 11.5v1" stroke="#5a93c6" stroke-width="0.9"/></svg>
<div class="act" style="left:1288px;top:270.5px">DOWNGRADE</div>
<div class="a" style="left:55px;top:292.3px;width:9px;height:16px;border-radius:1.5px;background:linear-gradient(90deg,#e0e0e0,#f8f8f8 45%,#fafafa 60%,#e2e2e2);box-shadow:0 0 0 0.5px #e6e6e6"></div>
<div class="a" style="left:56px;top:292.5px;width:2px;height:1px;background:#b9aaa0"></div>
<div class="a" style="left:61px;top:292.5px;width:2px;height:1px;background:#b9aaa0"></div>
<div class="a" style="left:55.5px;top:303.7px;width:8px;height:0.8px;background:#d5d5d5"></div>
<div class="a" style="left:58.2px;top:300.7px;width:2.6px;height:1.8px;border-radius:0.8px;background:#c3204a"></div>
<div class="td off c1" style="left:88.5px;top:294.7px">beach karta 1</div>
<div class="td off c2" style="left:204px;top:294.7px">192.168.1.77</div>
<div class="badge r" style="left:288px;top:295.6px">ОТКЛЮЧЕНО</div>
<div class="td off c3" style="left:367px;top:294.7px">UniFi AP-Outdoor</div>
<div class="td off c4" style="left:465px;top:294.7px">3.7.58.6385</div>
<div class="td off c6" style="left:642px;top:294.7px">0</div>
<div class="td off c7" style="left:720.5px;top:294.7px">Авто (Выключен)&nbsp; / Auto</div>
<div class="bar" style="top:300.5px"></div>
<div class="a" style="left:40px;top:313.1px;width:1326px;height:25.6px;background:#fafafa"></div>
<div class="a" style="left:50px;top:317.1px;width:18.8px;height:18.8px;border-radius:50%;background:radial-gradient(circle at 50% 35%,#fbfbfb 0,#ececec 50%,#d2d2d2 100%);border:1.3px solid #a9a9a9"></div>
<div class="a" style="left:54.9px;top:322.0px;width:9px;height:9px;border-radius:50%;border:2px solid #3ab476;background:#d6f6e0;box-shadow:0 0 1px 0.5px rgba(120,230,160,0.5)"></div>
<div class="td c1" style="left:88.5px;top:320.3px">chair 3 floor</div>
<div class="td c2" style="left:204px;top:320.3px">192.168.1.78</div>
<div class="badge" style="left:288px;top:321.2px">ПОДКЛЮЧЕНО</div>
<div class="td c3" style="left:367px;top:320.3px">UniFi AP-LR</div>
<div class="td c4" style="left:465px;top:320.3px">3.9.24.8264</div>
<div class="td c5" style="left:538px;top:320.3px">11d 8h 30m 3s</div>
<div class="td c6" style="left:642px;top:320.3px">9</div>
<div class="td c7" style="left:720.5px;top:320.3px">1 HT20&nbsp; / High (20 dBm)</div>
<div class="td tx c8" style="left:877px;top:320.3px">67.5 KB</div>
<div class="td c9" style="left:935px;top:320.3px">1 (ng)</div>
<div class="bar" style="top:326.1px"></div>
<div class="a" style="left:1008px;top:326.1px;width:2px;height:2px;background:#21907e"></div>
<div class="a" style="left:1011px;top:326.1px;width:6px;height:2px;background:#7cc35b"></div>
<div class="a" style="left:1017px;top:326.1px;width:1px;height:2px;background:#f0a030"></div>
<svg class="a" style="left:1110px;top:319.5px" width="11" height="13" viewBox="0 0 11 13"><path d="M5.5 12.2C3.2 9 1.5 6.8 1.5 4.8a4 4 0 0 1 8 0c0 2-1.7 4.2-4 7.4z" fill="none" stroke="#6aa8d6" stroke-width="1"/><circle cx="5.5" cy="4.7" r="1.4" fill="none" stroke="#6aa8d6" stroke-width="0.9"/></svg>
<div class="act" style="left:1127px;top:321.7px">НАЙТИ</div>
<svg class="a" style="left:1171px;top:319.5px" width="13" height="13" viewBox="0 0 13 13"><path d="M4.2 3.6A4.8 4.8 0 0 0 6.5 12.5" fill="none" stroke="#3d8fc6" stroke-width="1.3"/><path d="M6.5 12.5A4.8 4.8 0 0 0 8.8 3.6" fill="none" stroke="#3d8fc6" stroke-width="1.3" stroke-dasharray="1.2 1"/><path d="M6.3 1V5.5" stroke="#4a9ed3" stroke-width="1.3"/></svg>
<div class="act" style="left:1188px;top:321.7px">ПЕРЕЗАПУСТИТЬ</div>
<svg class="a" style="left:1270px;top:319.5px" width="14" height="13" viewBox="0 0 14 13"><path d="M6.8 0.6L7.5 2L9 2.1L7.9 3.1L8.2 4.5L6.8 3.8L5.4 4.5L5.7 3.1L4.6 2.1L6.1 2z" fill="#2f86c0"/><path d="M6.8 4.2v3.3" fill="none" stroke="#8fbde0" stroke-width="1.2"/><rect x="1.6" y="7.5" width="10.5" height="4" rx="0.8" fill="none" stroke="#5a93c6" stroke-width="1"/><path d="M3 6.8v0.8M5.3 6.8v0.8M8.3 6.8v0.8M10.7 6.8v0.8M3 11.5v1M5.3 11.5v1M8.3 11.5v1M10.7 11.5v1" stroke="#5a93c6" stroke-width="0.9"/></svg>
<div class="act" style="left:1288px;top:321.7px">DOWNGRADE</div>
<div class="a" style="left:50px;top:342.7px;width:18.8px;height:18.8px;border-radius:50%;background:radial-gradient(circle at 50% 35%,#fbfbfb 0,#ececec 50%,#d2d2d2 100%);border:1.3px solid #a9a9a9"></div>
<div class="a" style="left:54.9px;top:347.6px;width:9px;height:9px;border-radius:50%;border:2px solid #3ab476;background:#d6f6e0;box-shadow:0 0 1px 0.5px rgba(120,230,160,0.5)"></div>
<div class="td c1" style="left:88.5px;top:345.9px">chair 5 floor</div>
<div class="td c2" style="left:204px;top:345.9px">192.168.1.79</div>
<div class="badge" style="left:288px;top:346.8px">ПОДКЛЮЧЕНО</div>
<div class="td c3" style="left:367px;top:345.9px">UniFi AP-LR</div>
<div class="td c4" style="left:465px;top:345.9px">3.9.24.8264</div>
<div class="td c5" style="left:538px;top:345.9px">14d 14h 10m 1s</div>
<div class="td c6" style="left:642px;top:345.9px">1</div>
<div class="td c7" style="left:720.5px;top:345.9px">6 HT20&nbsp; / High (20 dBm)</div>
<div class="td tx c8" style="left:877px;top:345.9px">3.22 MB</div>
<div class="td c9" style="left:935px;top:345.9px">6 (ng)</div>
<div class="bar" style="top:351.7px"></div>
<div class="a" style="left:1008px;top:351.7px;width:14px;height:2px;background:#21907e"></div>
<div class="a" style="left:1022px;top:351.7px;width:46px;height:2px;background:#93c56a"></div>
<div class="a" style="left:1068px;top:351.7px;width:4px;height:2px;background:#e8763a"></div>
<svg class="a" style="left:1110px;top:345.1px" width="11" height="13" viewBox="0 0 11 13"><path d="M5.5 12.2C3.2 9 1.5 6.8 1.5 4.8a4 4 0 0 1 8 0c0 2-1.7 4.2-4 7.4z" fill="none" stroke="#6aa8d6" stroke-width="1"/><circle cx="5.5" cy="4.7" r="1.4" fill="none" stroke="#6aa8d6" stroke-width="0.9"/></svg>
<div class="act" style="left:1127px;top:347.3px">НАЙТИ</div>
<svg class="a" style="left:1171px;top:345.1px" width="13" height="13" viewBox="0 0 13 13"><path d="M4.2 3.6A4.8 4.8 0 0 0 6.5 12.5" fill="none" stroke="#3d8fc6" stroke-width="1.3"/><path d="M6.5 12.5A4.8 4.8 0 0 0 8.8 3.6" fill="none" stroke="#3d8fc6" stroke-width="1.3" stroke-dasharray="1.2 1"/><path d="M6.3 1V5.5" stroke="#4a9ed3" stroke-width="1.3"/></svg>
<div class="act" style="left:1188px;top:347.3px">ПЕРЕЗАПУСТИТЬ</div>
<svg class="a" style="left:1270px;top:345.1px" width="14" height="13" viewBox="0 0 14 13"><path d="M6.8 0.6L7.5 2L9 2.1L7.9 3.1L8.2 4.5L6.8 3.8L5.4 4.5L5.7 3.1L4.6 2.1L6.1 2z" fill="#2f86c0"/><path d="M6.8 4.2v3.3" fill="none" stroke="#8fbde0" stroke-width="1.2"/><rect x="1.6" y="7.5" width="10.5" height="4" rx="0.8" fill="none" stroke="#5a93c6" stroke-width="1"/><path d="M3 6.8v0.8M5.3 6.8v0.8M8.3 6.8v0.8M10.7 6.8v0.8M3 11.5v1M5.3 11.5v1M8.3 11.5v1M10.7 11.5v1" stroke="#5a93c6" stroke-width="0.9"/></svg>
<div class="act" style="left:1288px;top:347.3px">DOWNGRADE</div>
<div class="a" style="left:40px;top:364.3px;width:1326px;height:25.6px;background:#fafafa"></div>
<div class="a" style="left:50px;top:368.3px;width:18.8px;height:18.8px;border-radius:50%;background:radial-gradient(circle at 50% 35%,#fbfbfb 0,#ececec 50%,#d2d2d2 100%);border:1.3px solid #a9a9a9"></div>
<div class="a" style="left:54.9px;top:373.2px;width:9px;height:9px;border-radius:50%;border:2px solid #3ab476;background:#d6f6e0;box-shadow:0 0 1px 0.5px rgba(120,230,160,0.5)"></div>
<div class="td c1" style="left:88.5px;top:371.5px">Com_dir</div>
<div class="td c2" style="left:204px;top:371.5px">192.168.1.243</div>
<div class="badge" style="left:288px;top:372.4px">ПОДКЛЮЧЕНО</div>
<div class="td c3" style="left:367px;top:371.5px">UniFi AP</div>
<div class="td c4" style="left:465px;top:371.5px">3.9.24.8264</div>
<div class="td c5" style="left:538px;top:371.5px">14d 14h 9m 36s</div>
<div class="td c6" style="left:642px;top:371.5px">4</div>
<div class="td c7" style="left:720.5px;top:371.5px">9 <span style='color:#9a9a9a'>(11,-1)</span> HT40&nbsp; / Auto (20 dBm)</div>
<div class="td tx c8" style="left:877px;top:371.5px">72.8 KB</div>
<div class="td c9" style="left:935px;top:371.5px">11 (ng)</div>
<div class="bar" style="top:377.3px"></div>
<div class="a" style="left:1008px;top:377.3px;width:5px;height:2px;background:#8cc36b"></div>
<svg class="a" style="left:1110px;top:370.7px" width="11" height="13" viewBox="0 0 11 13"><path d="M5.5 12.2C3.2 9 1.5 6.8 1.5 4.8a4 4 0 0 1 8 0c0 2-1.7 4.2-4 7.4z" fill="none" stroke="#6aa8d6" stroke-width="1"/><circle cx="5.5" cy="4.7" r="1.4" fill="none" stroke="#6aa8d6" stroke-width="0.9"/></svg>
<div class="act" style="left:1127px;top:372.9px">НАЙТИ</div>
<svg class="a" style="left:1171px;top:370.7px" width="13" height="13" viewBox="0 0 13 13"><path d="M4.2 3.6A4.8 4.8 0 0 0 6.5 12.5" fill="none" stroke="#3d8fc6" stroke-width="1.3"/><path d="M6.5 12.5A4.8 4.8 0 0 0 8.8 3.6" fill="none" stroke="#3d8fc6" stroke-width="1.3" stroke-dasharray="1.2 1"/><path d="M6.3 1V5.5" stroke="#4a9ed3" stroke-width="1.3"/></svg>
<div class="act" style="left:1188px;top:372.9px">ПЕРЕЗАПУСТИТЬ</div>
<svg class="a" style="left:1270px;top:370.7px" width="14" height="13" viewBox="0 0 14 13"><path d="M6.8 0.6L7.5 2L9 2.1L7.9 3.1L8.2 4.5L6.8 3.8L5.4 4.5L5.7 3.1L4.6 2.1L6.1 2z" fill="#2f86c0"/><path d="M6.8 4.2v3.3" fill="none" stroke="#8fbde0" stroke-width="1.2"/><rect x="1.6" y="7.5" width="10.5" height="4" rx="0.8" fill="none" stroke="#5a93c6" stroke-width="1"/><path d="M3 6.8v0.8M5.3 6.8v0.8M8.3 6.8v0.8M10.7 6.8v0.8M3 11.5v1M5.3 11.5v1M8.3 11.5v1M10.7 11.5v1" stroke="#5a93c6" stroke-width="0.9"/></svg>
<div class="act" style="left:1288px;top:372.9px">DOWNGRADE</div>
<div class="a" style="left:50px;top:393.9px;width:18.8px;height:18.8px;border-radius:50%;background:radial-gradient(circle at 50% 35%,#fbfbfb 0,#ececec 50%,#d2d2d2 100%);border:1.3px solid #a9a9a9"></div>
<div class="a" style="left:54.9px;top:398.8px;width:9px;height:9px;border-radius:50%;border:2px solid #3ab476;background:#d6f6e0;box-shadow:0 0 1px 0.5px rgba(120,230,160,0.5)"></div>
<div class="td c1" style="left:88.5px;top:397.1px">Dir</div>
<div class="td c2" style="left:204px;top:397.1px">192.168.1.75</div>
<div class="badge" style="left:288px;top:398.0px">ПОДКЛЮЧЕНО</div>
<div class="td c3" style="left:367px;top:397.1px">UniFi AP-LR</div>
<div class="td c4" style="left:465px;top:397.1px">3.9.24.8264</div>
<div class="td c5" style="left:538px;top:397.1px">14d 14h 9m 31s</div>
<div class="td c6" style="left:642px;top:397.1px">0</div>
<div class="td c7" style="left:720.5px;top:397.1px">3 <span style='color:#9a9a9a'>(1,+1)</span> HT40&nbsp; / Auto (20 dBm)</div>
<div class="td tx c8" style="left:877px;top:397.1px">0 B</div>
<div class="td c9" style="left:935px;top:397.1px">1 (ng)</div>
<div class="bar" style="top:402.9px"></div>
<div class="a" style="left:1008px;top:402.9px;width:3px;height:2px;background:#21907e"></div>
<div class="a" style="left:1012px;top:402.9px;width:2px;height:2px;background:#b6c94a"></div>
<svg class="a" style="left:1110px;top:396.3px" width="11" height="13" viewBox="0 0 11 13"><path d="M5.5 12.2C3.2 9 1.5 6.8 1.5 4.8a4 4 0 0 1 8 0c0 2-1.7 4.2-4 7.4z" fill="none" stroke="#6aa8d6" stroke-width="1"/><circle cx="5.5" cy="4.7" r="1.4" fill="none" stroke="#6aa8d6" stroke-width="0.9"/></svg>
<div class="act" style="left:1127px;top:398.5px">НАЙТИ</div>
<svg class="a" style="left:1171px;top:396.3px" width="13" height="13" viewBox="0 0 13 13"><path d="M4.2 3.6A4.8 4.8 0 0 0 6.5 12.5" fill="none" stroke="#3d8fc6" stroke-width="1.3"/><path d="M6.5 12.5A4.8 4.8 0 0 0 8.8 3.6" fill="none" stroke="#3d8fc6" stroke-width="1.3" stroke-dasharray="1.2 1"/><path d="M6.3 1V5.5" stroke="#4a9ed3" stroke-width="1.3"/></svg>
<div class="act" style="left:1188px;top:398.5px">ПЕРЕЗАПУСТИТЬ</div>
<svg class="a" style="left:1270px;top:396.3px" width="14" height="13" viewBox="0 0 14 13"><path d="M6.8 0.6L7.5 2L9 2.1L7.9 3.1L8.2 4.5L6.8 3.8L5.4 4.5L5.7 3.1L4.6 2.1L6.1 2z" fill="#2f86c0"/><path d="M6.8 4.2v3.3" fill="none" stroke="#8fbde0" stroke-width="1.2"/><rect x="1.6" y="7.5" width="10.5" height="4" rx="0.8" fill="none" stroke="#5a93c6" stroke-width="1"/><path d="M3 6.8v0.8M5.3 6.8v0.8M8.3 6.8v0.8M10.7 6.8v0.8M3 11.5v1M5.3 11.5v1M8.3 11.5v1M10.7 11.5v1" stroke="#5a93c6" stroke-width="0.9"/></svg>
<div class="act" style="left:1288px;top:398.5px">DOWNGRADE</div>
<div class="a" style="left:40px;top:415.5px;width:1326px;height:25.6px;background:#fafafa"></div>
<div class="a" style="left:55px;top:420.3px;width:9px;height:16px;border-radius:1.5px;background:linear-gradient(90deg,#e0e0e0,#f8f8f8 45%,#fafafa 60%,#e2e2e2);box-shadow:0 0 0 0.5px #e6e6e6"></div>
<div class="a" style="left:56px;top:420.5px;width:2px;height:1px;background:#b9aaa0"></div>
<div class="a" style="left:61px;top:420.5px;width:2px;height:1px;background:#b9aaa0"></div>
<div class="a" style="left:55.5px;top:431.7px;width:8px;height:0.8px;background:#d5d5d5"></div>
<div class="a" style="left:58.2px;top:428.7px;width:2.6px;height:1.8px;border-radius:0.8px;background:#c3204a"></div>
<div class="td off c1" style="left:88.5px;top:422.7px">swimming_pool</div>
<div class="td off c2" style="left:204px;top:422.7px">192.168.1.22</div>
<div class="badge r" style="left:288px;top:423.6px">ОТКЛЮЧЕНО</div>
<div class="td off c3" style="left:367px;top:422.7px">UniFi AP-Outdoor</div>
<div class="td off c4" style="left:465px;top:422.7px">3.7.58.6385</div>
<div class="td off c6" style="left:642px;top:422.7px">0</div>
<div class="td off c7" style="left:720.5px;top:422.7px">Выключен 11&nbsp; / Auto</div>
<div class="bar" style="top:428.5px"></div>
<div class="a" style="left:40px;top:440px;width:1326px;height:1px;background:#e6e6e6"></div>
<div class="a" style="left:50px;top:450px;font-size:9.4px;color:#222;line-height:11px;white-space:nowrap;letter-spacing:0.27px">Отображение 1-10 из 10 записей.</div>
<div class="a" style="left:213px;top:450px;font-size:9.4px;color:#222;line-height:11px;white-space:nowrap;letter-spacing:0.12px">Элементов на странице:</div>
<div class="a" style="left:329px;top:448px;width:53px;height:17px;border:1px solid #d9d9d9;background:#fff"></div>
<div class="a" style="left:337px;top:452px;font-size:9.2px;color:#222;line-height:11px">50</div>
<svg class="a" style="left:367px;top:455px" width="8" height="5" viewBox="0 0 8 5"><path d="M0.5 0.5L4 4L7.5 0.5" fill="none" stroke="#bbb" stroke-width="0.9"/></svg>


<!-- TASKBAR -->
<div class="a" style="left:0;top:728px;width:1366px;height:40px;background:#67c9eb;border-top:1px solid #2f6478;border-bottom:1px solid #3a7086"></div>
<div class="a" style="left:0;top:729px;width:1366px;height:1px;background:#86d3ef"></div>
<div class="a" style="left:0;top:728px;width:1px;height:40px;background:#2f6478"></div>
<svg class="a" style="left:11px;top:734px" width="28" height="28" viewBox="0 0 28 28"><path d="M1 4.5l10.5-1.5v10H1zM13 2.8L27 1v12H13zM1 14.5h10.5v10L1 23zM13 14.5h14V27l-14-2z" fill="#fff"/></svg>
<svg class="a" style="left:64px;top:731px" width="36" height="34" viewBox="0 0 36 34"><rect x="1" y="1" width="15.5" height="29" fill="#1e7fd6" stroke="#fff" stroke-width="1"/><path d="M1 9h15.5" stroke="#5eb0ef" stroke-width="1"/><rect x="6.5" y="16.5" width="26.5" height="16" rx="1.5" fill="#7a8592" stroke="#fff" stroke-width="1"/><path d="M14 16.5v-2.5h12v2.5" fill="#7a8592" stroke="#fff" stroke-width="1"/><path d="M9.5 22.5h21" stroke="#fff" stroke-width="1"/><circle cx="12" cy="22.5" r="1" fill="#fff"/><circle cx="28" cy="22.5" r="1" fill="#fff"/></svg>
<svg class="a" style="left:129px;top:736px" width="30" height="24" viewBox="0 0 30 24"><path d="M6 1h23l-5 22H1z" fill="#1f64b8"/><path d="M6 1h23l-1 4H5z" fill="#3a8ae0"/><path d="M8 7l6 5-8 5" fill="none" stroke="#fff" stroke-width="2"/><path d="M14 18h7" stroke="#fff" stroke-width="2"/></svg>
<div class="a" style="left:175px;top:729px;width:54px;height:39px;border-right:1px solid #4c95ae;border-left:1px solid #4c95ae"></div>
<div class="a" style="left:231px;top:729px;width:1px;height:39px;background:#4c95ae"></div>
<svg class="a" style="left:185px;top:733px" width="34" height="31" viewBox="0 0 34 31"><path d="M1 3h12l2 3h18v24H1z" fill="#e8b84a"/><rect x="4" y="2" width="3" height="2" fill="#3db030"/><rect x="24" y="5" width="3" height="2" fill="#2a8ad0"/><path d="M1 10h32v20H1z" fill="#f5d47a"/><path d="M7 19h20v11H7z" fill="#c5d8e8" stroke="#7aa0c0" stroke-width="1"/><path d="M10 24h14v6H10z" fill="#8ab0d0"/></svg>
<div class="a" style="left:237px;top:729px;width:60px;height:39px;background:#a6dcf0;border:1px solid #245a6c;border-bottom:none"></div>
<svg class="a" style="left:251px;top:733px" width="32" height="32" viewBox="0 0 32 32"><defs><linearGradient id="ffa" x1="0.9" y1="0.1" x2="0.1" y2="0.9"><stop offset="0" stop-color="#fff44f"/><stop offset="0.35" stop-color="#ffb020"/><stop offset="0.7" stop-color="#ff4a2a"/><stop offset="1" stop-color="#d2186a"/></linearGradient><radialGradient id="ffb" cx="0.45" cy="0.35" r="0.7"><stop offset="0" stop-color="#3a9cff"/><stop offset="0.7" stop-color="#1f5fd6"/><stop offset="1" stop-color="#3a2a9e"/></radialGradient></defs>
<circle cx="16" cy="16.5" r="14" fill="url(#ffa)"/><circle cx="17" cy="13" r="7.2" fill="url(#ffb)"/>
<path d="M6 4.5L8 8C9.5 6.5 11.5 6 13 6.5L12 9.5L13.5 11.5L11 13.5L12 16C13 17.5 15 18 17 17.5L19 19.5C16.5 21 12 20.5 10 18C7.5 15 6.5 11 6 4.5z" fill="#ff5d26"/>
<path d="M18 2C23 4 26.5 8.5 26.5 14C26.5 19 23 23 18.5 23.5C22 21 23 17 22 13.5C21 10 19.5 8 19 5.5z" fill="#ffd42e"/>
<path d="M12.5 17.2C14.5 18.2 17.5 18.5 19.5 17.5L19 19.2C17 20.2 14 19.8 12.5 17.2z" fill="#ff8d1f"/></svg>
<svg class="a" style="left:313px;top:733px" width="31" height="31" viewBox="0 0 32 32"><circle cx="16" cy="16" r="15" fill="#db4437"/><path d="M16 16L3 23.5A15 15 0 0 0 16 31z" fill="#0f9d58"/><path d="M3 23.5A15 15 0 0 1 1.5 10L16 16z" fill="#0f9d58"/><path d="M16 16L16 31A15 15 0 0 0 29 8.5z" fill="#ffcd40"/><path d="M16 16H31A15 15 0 0 0 29 8.5z" fill="#ffcd40"/><circle cx="16" cy="16" r="7" fill="#fff"/><circle cx="16" cy="16" r="5.5" fill="#4285f4"/></svg>
<div class="a" style="left:361px;top:729px;width:60px;height:39px;border-left:1px solid #4c95ae;border-right:1px solid #4c95ae"></div>
<div class="a" style="left:374px;top:732px;width:33px;height:33px;border-radius:50%;background:radial-gradient(circle at 45% 40%,#fafafa 0,#e8e8e8 55%,#bdbdbd 100%)"></div>
<div class="a" style="left:384px;top:742px;width:13px;height:13px;border-radius:50%;border:1px solid #cfcfcf"></div>
<svg class="a" style="left:1154px;top:745px" width="9" height="6" viewBox="0 0 9 6"><path d="M0.5 5L4.5 0.8L8.5 5z" fill="#111"/></svg>
<svg class="a" style="left:1172px;top:738px" width="22" height="20" viewBox="0 0 22 20"><g stroke="#17394a" stroke-width="2.6" fill="none" stroke-linejoin="round"><path d="M4.5 3v14.5"/><path d="M5.5 3.2h6.5l2 2.5 4 .3v4.5h-12.5z"/></g><g stroke="#fff" stroke-width="1.2" fill="#fff" stroke-linejoin="round"><path d="M4.5 3v14.5"/><path d="M5.5 3.2h6.5l2 2.5 4 .3v4.5h-12.5z"/></g><circle cx="14.2" cy="13" r="4.6" fill="#d42a2a" stroke="#8a1a1a" stroke-width="0.6"/><path d="M12.3 11.1l3.8 3.8M16.1 11.1l-3.8 3.8" stroke="#fff" stroke-width="1.3"/></svg>
<svg class="a" style="left:1198px;top:739px" width="20" height="18" viewBox="0 0 20 18"><g stroke="#17394a" stroke-width="2.6" fill="none" stroke-linejoin="round"><rect x="1.5" y="1.5" width="4" height="5.5" rx="1"/><path d="M3.5 7v9.5"/><rect x="6.5" y="2.5" width="9.5" height="7.5"/><path d="M8.5 14.5h7M12 10v4.5"/></g><g stroke="#fff" stroke-width="1.1" fill="none" stroke-linejoin="round"><rect x="1.5" y="1.5" width="4" height="5.5" rx="1"/><path d="M3.5 7v9.5"/><rect x="6.5" y="2.5" width="9.5" height="7.5"/><path d="M8.5 14.5h7M12 10v4.5"/></g></svg>
<svg class="a" style="left:1221px;top:739px" width="20" height="18" viewBox="0 0 20 18"><path d="M2.5 6h2.5l4.5-4v14l-4.5-4h-2.5z" fill="#fff" stroke="#17394a" stroke-width="1.1" stroke-linejoin="round"/><circle cx="13" cy="12" r="4.6" fill="#d42a2a" stroke="#8a1a1a" stroke-width="0.6"/><path d="M11.1 10.1l3.8 3.8M14.9 10.1l-3.8 3.8" stroke="#fff" stroke-width="1.3"/></svg>
<div class="a" style="left:1252px;top:741px;font-size:12px;color:#111;line-height:14px">ENG</div>
<div class="a" style="left:1295px;top:733px;font-size:11.5px;color:#111;line-height:14px;width:50px;text-align:center">16:46</div>
<div class="a" style="left:1293px;top:750px;font-size:11.5px;color:#111;line-height:14px;letter-spacing:-0.3px">04.04.2018</div>
<div class="a" style="left:1366px;top:0;width:31px;height:768px;background:#fff"></div>

</body></html>
